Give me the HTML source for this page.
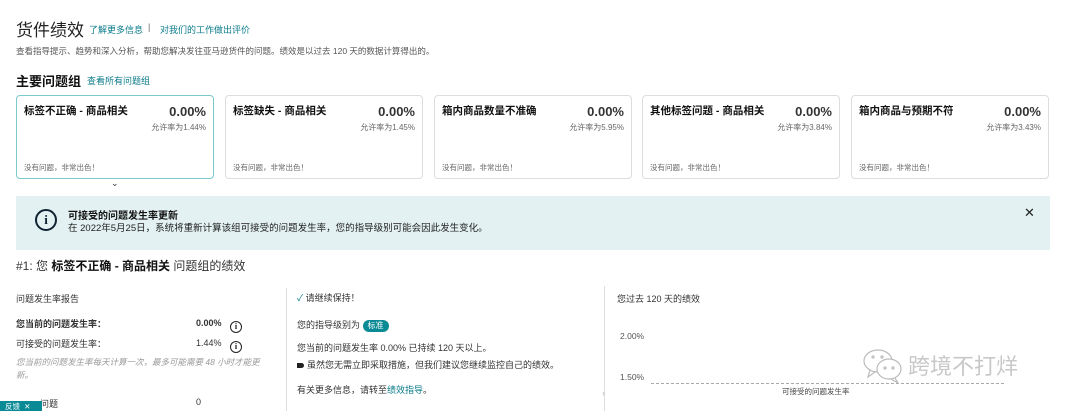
<!DOCTYPE html>
<html><head><meta charset="utf-8"><style>
*{margin:0;padding:0;box-sizing:border-box}
body{width:1080px;height:411px;overflow:hidden;background:#fff;font-family:"Liberation Sans","Noto Sans CJK SC",sans-serif;color:#111;position:relative}
.a{position:absolute;white-space:nowrap}
.lk{color:#0a7b8a}
.card{position:absolute;top:95px;width:198px;height:84px;border:1px solid #ddd;border-radius:4px;background:#fff}
.card.sel{border-color:#7cc9cf}
.card .t{position:absolute;left:7px;top:7px;font-size:10.5px;font-weight:bold}
.card .p{position:absolute;right:7px;top:8px;font-size:13px;font-weight:bold;color:#333}
.card .r{position:absolute;right:7px;top:26px;font-size:8px;color:#666}
.card .n{position:absolute;left:7px;top:66px;font-size:7.5px;color:#666}
.s{font-size:9px;color:#333}
.circ{display:inline-block;width:12px;height:12px;border:1.3px solid #222;border-radius:50%;font-size:8px;text-align:center;line-height:10px;font-weight:bold;font-family:"Liberation Serif",serif}
</style></head><body>
<div class="a" style="left:16px;top:16px;font-size:17px;color:#222">货件绩效</div>
<div class="a lk" style="left:89px;top:23px;font-size:9px">了解更多信息</div>
<div class="a" style="left:148px;top:22px;font-size:9px;color:#666">|</div>
<div class="a lk" style="left:160px;top:23px;font-size:9px">对我们的工作做出评价</div>
<div class="a" style="left:16px;top:45px;font-size:8.5px;color:#555">查看指导提示、趋势和深入分析，帮助您解决发往亚马逊货件的问题。绩效是以过去 120 天的数据计算得出的。</div>
<div class="a" style="left:16px;top:71px;font-size:13px;font-weight:bold">主要问题组</div>
<div class="a lk" style="left:87px;top:74px;font-size:9px">查看所有问题组</div>

<div class="card sel" style="left:16px"><div class="t">标签不正确 - 商品相关</div><div class="p">0.00%</div><div class="r">允许率为1.44%</div><div class="n">没有问题，非常出色！</div></div>
<div class="card" style="left:225px"><div class="t">标签缺失 - 商品相关</div><div class="p">0.00%</div><div class="r">允许率为1.45%</div><div class="n">没有问题，非常出色！</div></div>
<div class="card" style="left:434px"><div class="t">箱内商品数量不准确</div><div class="p">0.00%</div><div class="r">允许率为5.95%</div><div class="n">没有问题，非常出色！</div></div>
<div class="card" style="left:642px"><div class="t">其他标签问题 - 商品相关</div><div class="p">0.00%</div><div class="r">允许率为3.84%</div><div class="n">没有问题，非常出色！</div></div>
<div class="card" style="left:851px"><div class="t">箱内商品与预期不符</div><div class="p">0.00%</div><div class="r">允许率为3.43%</div><div class="n">没有问题，非常出色！</div></div>
<div class="a" style="left:111px;top:178px;font-size:9px;color:#333">⌄</div>

<div class="a" style="left:16px;top:196px;width:1034px;height:54px;background:#e3f1f2"></div>
<div class="a" style="left:35px;top:209px;width:22px;height:22px;border:2.2px solid #123;border-radius:50%;text-align:center;font:bold 13px/18px 'Liberation Serif',serif;color:#123">i</div>
<div class="a" style="left:68px;top:207px;font-size:10px;font-weight:bold">可接受的问题发生率更新</div>
<div class="a" style="left:68px;top:220px;font-size:9.5px;color:#222">在 2022年5月25日，系统将重新计算该组可接受的问题发生率，您的指导级别可能会因此发生变化。</div>
<div class="a" style="left:1024px;top:205px;font-size:13px;color:#222">✕</div>

<div class="a" style="left:16px;top:257px;font-size:12px;color:#333">#1: 您 <b style="color:#111">标签不正确 - 商品相关</b> 问题组的绩效</div>

<div class="a" style="left:286px;top:288px;width:1px;height:123px;background:#ddd"></div>
<div class="a" style="left:604px;top:286px;width:1px;height:125px;background:#ddd"></div>

<div class="a s" style="left:16px;top:292px">问题发生率报告</div>
<div class="a s" style="left:16px;top:317px;font-weight:bold">您当前的问题发生率：</div>
<div class="a s" style="left:196px;top:318px;font-weight:bold">0.00%</div>
<div class="a" style="left:230px;top:316px"><span class="circ">i</span></div>
<div class="a s" style="left:16px;top:337px">可接受的问题发生率：</div>
<div class="a s" style="left:196px;top:338px">1.44%</div>
<div class="a" style="left:230px;top:336px"><span class="circ">i</span></div>
<div class="a" style="left:16px;top:356px;font-size:8.5px;color:#999;font-style:italic;width:250px;white-space:normal;line-height:13px">您当前的问题发生率每天计算一次，最多可能需要 48 小时才能更新。</div>
<div class="a s" style="left:40px;top:397px">问题</div>
<div class="a s" style="left:196px;top:397px">0</div>
<div class="a" style="left:0;top:401px;width:42px;height:10px;background:#0a8a95;color:#fff;font-size:7.5px;padding-left:5px;line-height:12px">反馈 &nbsp;✕</div>

<div class="a s" style="left:297px;top:291px"><span style="color:#0a7b8a">✓</span> 请继续保持！</div>
<div class="a s" style="left:297px;top:318px">您的指导级别为 <span style="display:inline-block;background:#0a8a95;color:#fff;border-radius:7px;padding:0 5px;font-size:8px;line-height:12px">标准</span></div>
<div class="a s" style="left:297px;top:341px">您当前的问题发生率 0.00% 已持续 120 天以上。</div>
<div class="a s" style="left:297px;top:358px"><span style="display:inline-block;width:7px;height:5px;background:#222;border-radius:0 3px 3px 0;margin-right:3px"></span>虽然您无需立即采取措施，但我们建议您继续监控自己的绩效。</div>
<div class="a s" style="left:297px;top:383px">有关更多信息，请转至<span class="lk">绩效指导</span>。</div>
<div class="a" style="left:602px;top:388px;font-size:9px;color:#bbb">›</div>

<div class="a s" style="left:617px;top:292px">您过去 120 天的绩效</div>
<div class="a" style="left:620px;top:331px;font-size:8.5px;color:#555">2.00%</div>
<div class="a" style="left:620px;top:372px;font-size:8.5px;color:#555">1.50%</div>
<div class="a" style="left:651px;top:383px;width:353px;border-top:1px dashed #aaa"></div>
<div class="a" style="left:782px;top:386px;font-size:7.5px;color:#444">可接受的问题发生率</div>
<svg class="a" style="left:862px;top:348px" width="44" height="36" viewBox="0 0 44 36" fill="none" stroke="#bbb" stroke-width="1.2"><ellipse cx="16" cy="13" rx="14" ry="11"/><path d="M8 22 L6 29 L13 24"/><ellipse cx="27" cy="21" rx="12" ry="10" fill="#fff"/><path d="M33 30 L36 35 L29 31"/><circle cx="11" cy="9" r="1"/><circle cx="20" cy="9" r="1"/><circle cx="23" cy="20" r="1"/><circle cx="31" cy="20" r="1"/></svg>
<div class="a" style="left:908px;top:349px;font-size:22px;color:#c8c8c8">跨境不打烊</div>
</body></html>
